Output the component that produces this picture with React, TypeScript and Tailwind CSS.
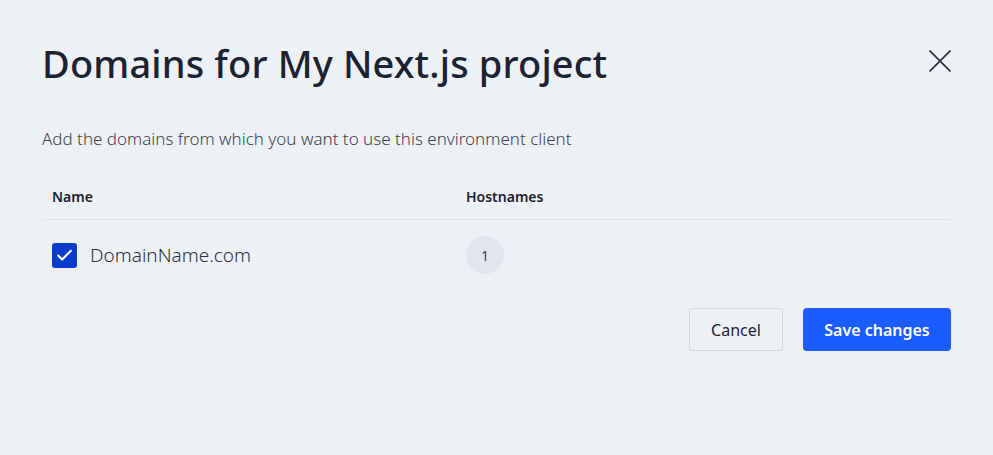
import { Check } from "lucide-react";

const App = () => {
  return (
    <div className="min-h-[455px] w-full bg-[#edf1f6] font-['Noto_Sans',sans-serif] text-[#1c2230]">
      <div className="px-[42px] pt-[37px]">
        {/* Header */}
        <div className="flex items-start justify-between">
          <h1 className="text-[38px] font-medium leading-[52px] tracking-[0.15px]">
            Domains for My Next.js project
          </h1>
          <button className="mt-[13px] text-[#2b303b]">
            <svg width="22" height="22" viewBox="0 0 22 22" fill="none" stroke="currentColor" strokeWidth="1.7">
              <path d="M0.5 0.5L21.5 21.5M21.5 0.5L0.5 21.5" />
            </svg>
          </button>
        </div>

        <p className="mt-[38px] text-[17px] font-light leading-[24px] text-[#3a3f4b]">
          Add the domains from which you want to use this environment client
        </p>

        {/* Table */}
        <div className="mt-[30px]">
          <div className="grid grid-cols-[414px_1fr] border-b border-[#dde3ea] px-[10px] pb-[12px] pt-[6px] text-[14px] font-semibold leading-[20px]">
            <span>Name</span>
            <span>Hostnames</span>
          </div>
          <div className="grid grid-cols-[414px_1fr] items-center px-[10px] pt-[16px]">
            <label className="flex items-center gap-[13px]">
              <span className="flex h-[25px] w-[25px] items-center justify-center rounded-[3px] bg-[#0a3ccc] text-white">
                <Check size={19} strokeWidth={2.6} />
              </span>
              <span className="text-[19px] font-light leading-[24px] text-[#2b303b]">
                DomainName.com
              </span>
            </label>
            <div>
              <span className="flex h-[38px] w-[38px] items-center justify-center rounded-full bg-[#e0e5ee] text-[14px] text-[#3a3f4b]">
                1
              </span>
            </div>
          </div>
        </div>

        {/* Actions */}
        <div className="mt-[34px] flex justify-end gap-[20px]">
          <button className="h-[43px] w-[94px] rounded-[4px] border border-[#d3d9e1] bg-[#edf1f6] text-[16px] text-[#1c2230]">
            Cancel
          </button>
          <button className="h-[43px] w-[148px] rounded-[4px] bg-[#1a5cff] text-[16px] font-semibold text-white">
            Save changes
          </button>
        </div>
      </div>
    </div>
  );
};

export default App;
